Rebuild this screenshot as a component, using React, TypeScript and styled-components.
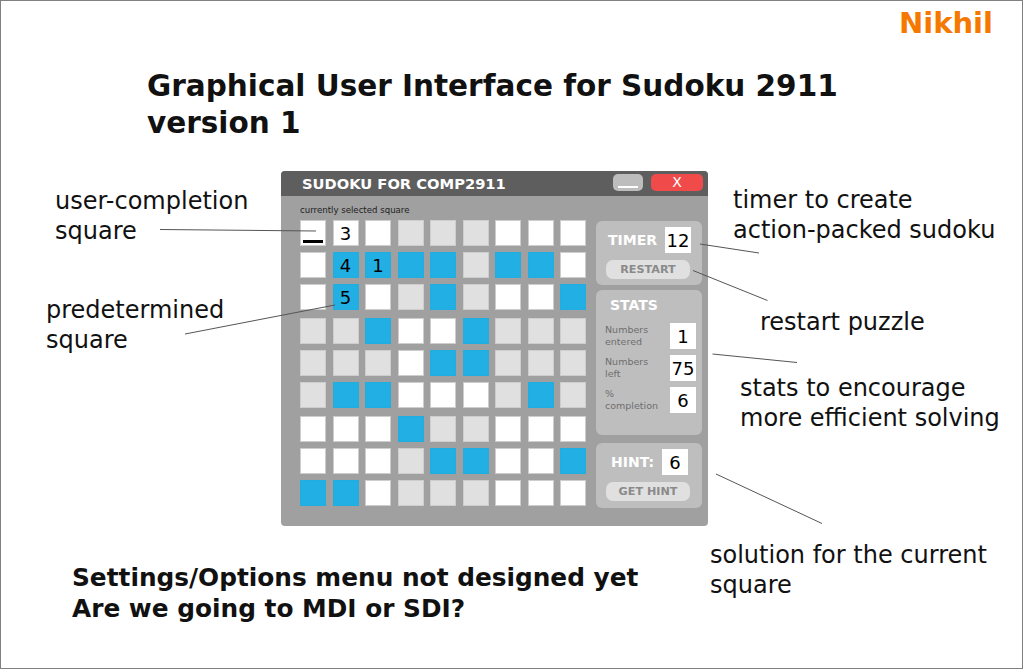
import React from "react";
import styled, { createGlobalStyle } from "styled-components";

const GlobalStyle = createGlobalStyle`
  html, body {
    margin: 0;
    padding: 0;
    background: #ffffff;
    overflow: hidden;
  }
  body {
    font-family: "DejaVu Sans", "Liberation Sans", sans-serif;
    color: #111;
  }
`;

const Frame = styled.div`
  position: relative;
  width: 1023px;
  height: 669px;
  box-sizing: border-box;
  border: 1px solid #808080;
  display: flex;
  flex-direction: column;
`;

const Author = styled.div`
  align-self: flex-end;
  margin-top: 5px;
  margin-right: 29px;
  font-size: 29px;
  line-height: 34px;
  font-weight: bold;
  color: #f57900;
`;

const Heading = styled.h1`
  margin: 28px 0 0 146px;
  font-size: 29.5px;
  line-height: 37px;
  font-weight: bold;
  color: #111;
`;

const Footer = styled.div`
  margin: 36.3px 0 0 71px;
  font-size: 24.8px;
  line-height: 31px;
  font-weight: bold;
  color: #111;
`;

/* ---------- window ---------- */

const Window = styled.div`
  margin: 29px 0 0 280px;
  width: 427px;
  border-radius: 4px;
  overflow: hidden;
  background: #a0a0a0;
`;

const TitleBar = styled.div`
  height: 25px;
  background: #5e5e5e;
  display: flex;
  align-items: flex-start;
  padding: 0 5px 0 21px;
`;

const TitleText = styled.div`
  flex: 1;
  color: #fff;
  font-weight: bold;
  font-size: 14.7px;
  line-height: 25px;
`;

const WinButtons = styled.div`
  display: flex;
  gap: 8px;
  padding-top: 3px;
`;

const WinButton = styled.div<{ $close?: boolean }>`
  width: ${(p) => (p.$close ? 52 : 30)}px;
  height: 17px;
  border-radius: 5px;
  background: ${(p) => (p.$close ? "#f14a4a" : "#bdbdbd")};
  color: #fff;
  font-size: 14px;
  line-height: 17px;
  text-align: center;
  position: relative;
`;

const MinBar = styled.span`
  position: absolute;
  left: 5px;
  right: 5px;
  top: 12px;
  height: 2px;
  background: #fff;
`;

const Body = styled.div`
  height: 330px;
  box-sizing: border-box;
  padding: 9px 6px 0 19px;
  display: flex;
  align-items: flex-start;
`;

const BoardColumn = styled.div`
  width: 287px;
`;

const BoardLabel = styled.div`
  font-size: 8.6px;
  line-height: 11px;
  color: #222;
  margin-bottom: 4px;
`;

const Board = styled.div`
  display: flex;
  flex-direction: column;
  gap: 8px;
`;

const Band = styled.div`
  display: grid;
  grid-template-columns: repeat(9, 26px);
  column-gap: 6.5px;
  row-gap: 6px;
`;

type Kind = "w" | "g" | "b" | "s";

const cellBg: Record<Kind, string> = {
  w: "#ffffff",
  s: "#ffffff",
  g: "#e0e0e0",
  b: "#22b0e4",
};

const Cell = styled.div<{ $kind: Kind }>`
  width: 26px;
  height: 26px;
  box-sizing: border-box;
  border: 1px solid ${(p) => (p.$kind === "b" ? "#22ade0" : "#cdcdcd")};
  background: ${(p) => cellBg[p.$kind]};
  display: flex;
  align-items: center;
  justify-content: center;
  font-size: 18px;
  color: #000;
  position: relative;
`;

const Cursor = styled.span`
  position: absolute;
  left: 2px;
  right: 2px;
  bottom: 2px;
  height: 3px;
  background: #000;
`;

const SideColumn = styled.div`
  margin-left: 9px;
  margin-top: 16px;
  width: 106px;
  display: flex;
  flex-direction: column;
`;

const Panel = styled.div<{ $h: number; $gap?: number }>`
  height: ${(p) => p.$h}px;
  margin-top: ${(p) => p.$gap ?? 0}px;
  box-sizing: border-box;
  background: #bebebe;
  border-radius: 6px;
`;

const PanelRow = styled.div<{ $left: number }>`
  display: flex;
  align-items: center;
  gap: 8px;
  padding: 6px 0 0 ${(p) => p.$left}px;
`;

const PanelTitle = styled.div<{ $left?: number }>`
  color: #fff;
  font-weight: bold;
  font-size: 14px;
  line-height: 16px;
  padding-left: ${(p) => p.$left ?? 0}px;
`;

const ValueBox = styled.div`
  width: 26px;
  height: 26px;
  background: #fff;
  display: flex;
  align-items: center;
  justify-content: center;
  font-size: 18px;
  color: #000;
`;

const PanelButton = styled.div`
  margin: 7px 0 0 10px;
  width: 84px;
  height: 19px;
  border-radius: 7px;
  background: #e0e0e0;
  color: #8a8a8a;
  font-weight: bold;
  font-size: 11.2px;
  line-height: 19px;
  text-align: center;
`;

const StatsHead = styled(PanelTitle)`
  padding: 7px 0 0 14px;
`;

const StatList = styled.div`
  margin-top: 10px;
  padding: 0 6px 0 9px;
  display: flex;
  flex-direction: column;
  gap: 6px;
`;

const StatRow = styled.div`
  display: flex;
  align-items: center;
  justify-content: space-between;
`;

const StatLabel = styled.div`
  font-size: 9.5px;
  line-height: 12px;
  color: #6e6e6e;
`;

/* ---------- annotations ---------- */

const Note = styled.div<{ $x: number; $y: number }>`
  position: absolute;
  left: ${(p) => p.$x - 1}px;
  top: ${(p) => p.$y - 1}px;
  font-size: 24px;
  line-height: 30px;
  color: #111;
  white-space: nowrap;
`;

const Leaders = styled.svg`
  position: absolute;
  left: -1px;
  top: -1px;
  width: 1024px;
  height: 670px;
  pointer-events: none;
`;

const rows: string[] = [
  "swwgggwww",
  "wbbbbgbbw",
  "wbwgbgwwb",
  "ggbwwbggg",
  "gggwbbggg",
  "gbbwwwgbg",
  "wwwbggwww",
  "wwwgbbwwb",
  "bbwgggwww",
];

const values: Record<string, string> = {
  "0-1": "3",
  "1-1": "4",
  "1-2": "1",
  "2-1": "5",
};

const stats = [
  { label: ["Numbers", "entered"], value: "1" },
  { label: ["Numbers", "left"], value: "75" },
  { label: ["%", "completion"], value: "6" },
];

const lines: [number, number, number, number][] = [
  [160, 229.5, 316, 231],
  [185, 334, 335, 305],
  [700, 244, 759, 253],
  [693, 270.5, 767.5, 300.5],
  [712.5, 354, 797, 362.5],
  [716, 474, 822, 523.5],
];

const App = () => {
  return (
    <>
      <GlobalStyle />
      <Frame>
        <Author>Nikhil</Author>
        <Heading>
          Graphical User Interface for Sudoku 2911
          <br />
          version 1
        </Heading>

        <Window>
          <TitleBar>
            <TitleText>SUDOKU FOR COMP2911</TitleText>
            <WinButtons>
              <WinButton>
                <MinBar />
              </WinButton>
              <WinButton $close>X</WinButton>
            </WinButtons>
          </TitleBar>
          <Body>
            <BoardColumn>
              <BoardLabel>currently selected square</BoardLabel>
              <Board>
                {[0, 1, 2].map((band) => (
                  <Band key={band}>
                    {rows.slice(band * 3, band * 3 + 3).map((row, ri) =>
                      row.split("").map((k, ci) => {
                        const r = band * 3 + ri;
                        return (
                          <Cell key={`${r}-${ci}`} $kind={k as Kind}>
                            {k === "s" ? <Cursor /> : values[`${r}-${ci}`]}
                          </Cell>
                        );
                      })
                    )}
                  </Band>
                ))}
              </Board>
            </BoardColumn>

            <SideColumn>
              <Panel $h={64}>
                <PanelRow $left={12}>
                  <PanelTitle>TIMER</PanelTitle>
                  <ValueBox>12</ValueBox>
                </PanelRow>
                <PanelButton>RESTART</PanelButton>
              </Panel>

              <Panel $h={145} $gap={5}>
                <StatsHead>STATS</StatsHead>
                <StatList>
                  {stats.map((s) => (
                    <StatRow key={s.label.join(" ")}>
                      <StatLabel>
                        {s.label[0]}
                        <br />
                        {s.label[1]}
                      </StatLabel>
                      <ValueBox>{s.value}</ValueBox>
                    </StatRow>
                  ))}
                </StatList>
              </Panel>

              <Panel $h={65} $gap={8}>
                <PanelRow $left={15}>
                  <PanelTitle>HINT:</PanelTitle>
                  <ValueBox>6</ValueBox>
                </PanelRow>
                <PanelButton>GET HINT</PanelButton>
              </Panel>
            </SideColumn>
          </Body>
        </Window>

        <Footer>
          Settings/Options menu not designed yet
          <br />
          Are we going to MDI or SDI?
        </Footer>

        <Note $x={55} $y={186.3}>
          user-completion
          <br />
          square
        </Note>
        <Note $x={46} $y={294.8}>
          predetermined
          <br />
          square
        </Note>
        <Note $x={733} $y={184.8}>
          timer to create
          <br />
          action-packed sudoku
        </Note>
        <Note $x={760} $y={306.8}>restart puzzle</Note>
        <Note $x={740} $y={373.3}>
          stats to encourage
          <br />
          more efficient solving
        </Note>
        <Note $x={710} $y={539.8}>
          solution for the current
          <br />
          square
        </Note>

        <Leaders viewBox="0 0 1024 670">
          {lines.map(([x1, y1, x2, y2], i) => (
            <line key={i} x1={x1} y1={y1} x2={x2} y2={y2} stroke="#555" strokeWidth={1} />
          ))}
        </Leaders>
      </Frame>
    </>
  );
};

export default App;
